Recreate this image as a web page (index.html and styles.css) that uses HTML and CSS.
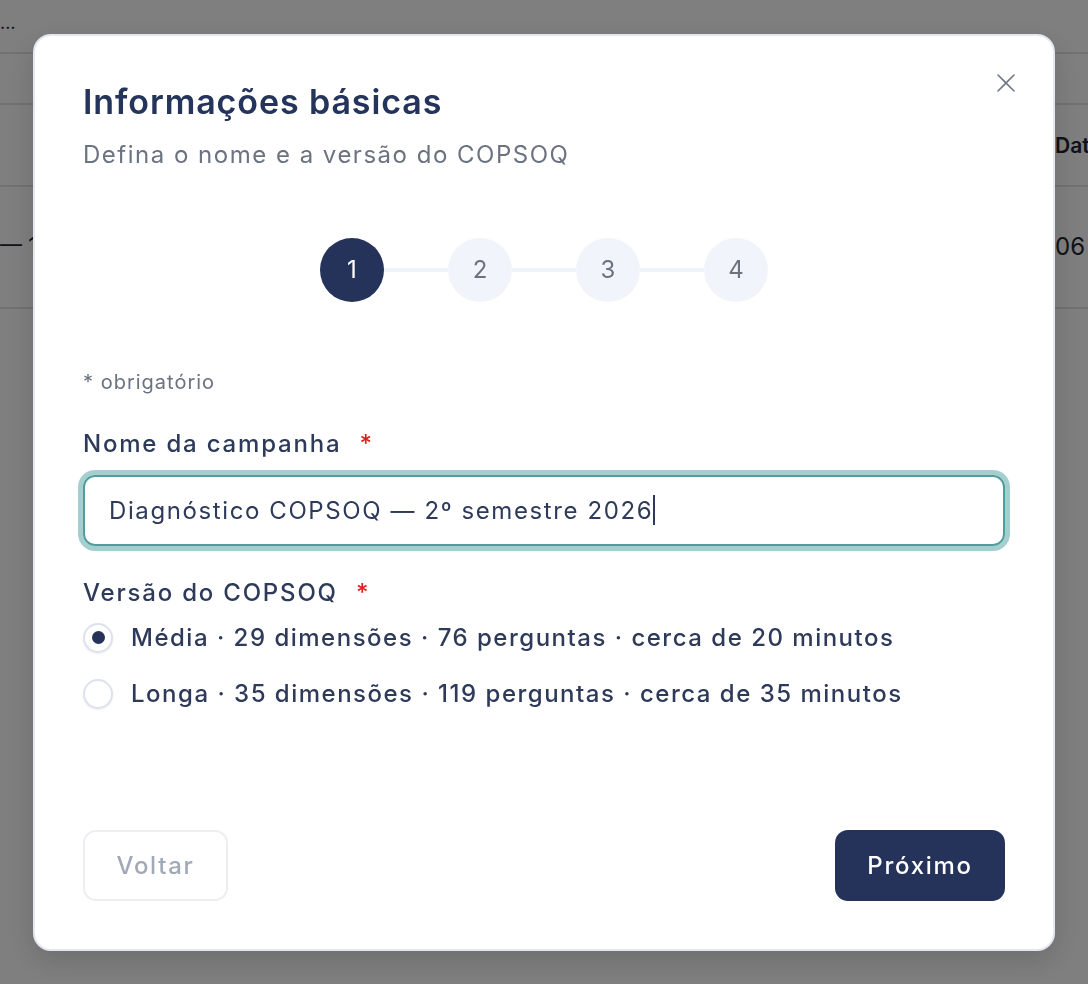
FILE: index.html
```html
<!DOCTYPE html>
<html lang="pt-BR">
<head>
<meta charset="utf-8">
<title>Informações básicas</title>
<link rel="stylesheet" href="styles.css">
</head>
<body>
<div class="page">
  <div class="bg-row bg-row-top"><span class="bg-left">…</span><span></span></div>
  <div class="bg-row bg-row-b"><span></span><span></span></div>
  <div class="bg-row bg-row-head"><span></span><span class="bg-right bold">Data</span></div>
  <div class="bg-row bg-row-data"><span class="bg-left">— 1</span><span class="bg-right big">06</span></div>
</div>
<div class="overlay">
  <div class="modal" role="dialog">
    <button class="close" aria-label="Fechar">
      <svg width="20" height="20" viewBox="0 0 20 20"><path d="M2 2 L18 18 M18 2 L2 18" stroke="#707887" stroke-width="1.6" stroke-linecap="round" fill="none"/></svg>
    </button>
    <h1 class="title">Informações básicas</h1>
    <p class="subtitle">Defina o nome e a versão do COPSOQ</p>

    <div class="stepper">
      <div class="step active">1</div>
      <div class="connector"></div>
      <div class="step">2</div>
      <div class="connector"></div>
      <div class="step">3</div>
      <div class="connector"></div>
      <div class="step">4</div>
    </div>

    <p class="required-note">* obrigatório</p>

    <label class="field-label">Nome da campanha <span class="req">*</span></label>
    <div class="input"><span>Diagnóstico COPSOQ — 2º semestre 2026</span><span class="caret"></span></div>

    <div class="field-label second">Versão do COPSOQ <span class="req">*</span></div>
    <div class="radios">
      <div class="radio-row"><span class="radio checked"></span><span>Média · 29 dimensões · 76 perguntas · cerca de 20 minutos</span></div>
      <div class="radio-row"><span class="radio"></span><span>Longa · 35 dimensões · 119 perguntas · cerca de 35 minutos</span></div>
    </div>

    <div class="footer">
      <button class="btn btn-back">Voltar</button>
      <button class="btn btn-next">Próximo</button>
    </div>
  </div>
</div>
</body>
</html>
```
FILE: styles.css
```css
* { box-sizing: border-box; }
html, body { margin: 0; padding: 0; }
body {
  width: 1088px;
  height: 984px;
  overflow: hidden;
  background: #ffffff;
  font-family: Inter, "Noto Sans", sans-serif;
  position: relative;
}

.page {
  width: 1088px;
  color: #1e2533;
  font-size: 22px;
}
.bg-row {
  display: grid;
  grid-template-columns: 1055px 1fr;
  align-items: center;
  border-bottom: 2px solid #e2e4e9;
  white-space: nowrap;
  overflow: hidden;
}
.bg-row-top { height: 54px; align-items: start; }
.bg-row-top .bg-left { margin-top: 12px; font-size: 18px; }
.bg-row-b { height: 51px; }
.bg-row-head { height: 82px; }
.bg-row-data { height: 122px; }
.bg-row-data .bg-left { margin-top: -4px; }
.bg-right { overflow: hidden; }
.bold { font-weight: 600; font-size: 21px; }
.big { font-size: 24px; margin-top: -2px; }

.overlay {
  position: fixed;
  inset: 0;
  background: rgba(0, 0, 0, 0.5);
  display: flex;
  align-items: center;
  justify-content: center;
}

.modal {
  position: relative;
  width: 1022px;
  height: 917px;
  background: #ffffff;
  border: 2px solid #e3e7ef;
  border-radius: 18px;
  padding: 46px 48px 0 48px;
  display: flex;
  flex-direction: column;
  box-shadow: 0 10px 30px rgba(0,0,0,0.15);
}

.close {
  position: absolute;
  top: 36px;
  right: 36px;
  width: 22px;
  height: 22px;
  padding: 0;
  border: 0;
  background: transparent;
  display: flex;
  align-items: center;
  justify-content: center;
}

.title {
  margin: 0;
  font-size: 34px;
  line-height: 40px;
  font-weight: 600;
  color: #24345a;
  letter-spacing: 0.9px;
}
.subtitle {
  margin: 18px 0 0 0;
  font-size: 24px;
  line-height: 30px;
  color: #6b7280;
  letter-spacing: 1.5px;
}

.stepper {
  margin-top: 68px;
  display: flex;
  align-items: center;
  justify-content: center;
}
.step {
  width: 64px;
  height: 64px;
  border-radius: 50%;
  background: #f1f4fb;
  color: #6b7280;
  font-size: 24px;
  display: flex;
  align-items: center;
  justify-content: center;
}
.step.active {
  background: #25335a;
  color: #ffffff;
}
.connector {
  width: 64px;
  height: 4px;
  background: #eff3fb;
}

.required-note {
  margin: 67px 0 0 0;
  font-size: 20px;
  line-height: 26px;
  color: #6b7280;
  letter-spacing: 1px;
}

.field-label {
  display: block;
  margin-top: 34px;
  font-size: 24px;
  line-height: 30px;
  font-weight: 500;
  color: #2e3a59;
  letter-spacing: 1.8px;
}
.field-label.second { margin-top: 32px; }
.req {
  color: #e11d1d;
  margin-left: 10px;
}

.input {
  margin-top: 16px;
  height: 71px;
  border: 2px solid #4f9d9c;
  border-radius: 12px;
  box-shadow: 0 0 0 5px #a5cfce;
  padding: 0 24px;
  display: flex;
  align-items: center;
  font-size: 24px;
  letter-spacing: 1.6px;
  color: #2e3a59;
}
.caret {
  display: inline-block;
  width: 2px;
  height: 30px;
  background: #2e3a59;
  margin-left: 0;
}

.radios {
  margin-top: 13px;
  display: flex;
  flex-direction: column;
  gap: 22px;
}
.radio-row {
  display: flex;
  align-items: center;
  gap: 18px;
  font-size: 24px;
  line-height: 34px;
  font-weight: 500;
  color: #2e3a59;
  letter-spacing: 1.5px;
}
.radio {
  width: 30px;
  height: 30px;
  border-radius: 50%;
  border: 2px solid #dde2ec;
  background: #ffffff;
  box-shadow: 0 1px 2px rgba(30, 40, 70, 0.08);
  display: flex;
  align-items: center;
  justify-content: center;
  flex-shrink: 0;
}
.radio.checked::after {
  content: "";
  width: 13px;
  height: 13px;
  border-radius: 50%;
  background: #25335a;
}

.footer {
  margin-top: auto;
  margin-bottom: 48px;
  display: flex;
  justify-content: space-between;
  align-items: center;
}
.btn {
  height: 71px;
  font-family: Inter, "Noto Sans", sans-serif;
  font-size: 24px;
  font-weight: 500;
  border-radius: 13px;
  padding: 0;
  letter-spacing: 1.7px;
}
.btn-back {
  width: 145px;
  background: #ffffff;
  border: 2px solid #eceef4;
  color: #a1a8b7;
}
.btn-next {
  width: 170px;
  background: #25335a;
  border: 0;
  color: #ffffff;
}
```
